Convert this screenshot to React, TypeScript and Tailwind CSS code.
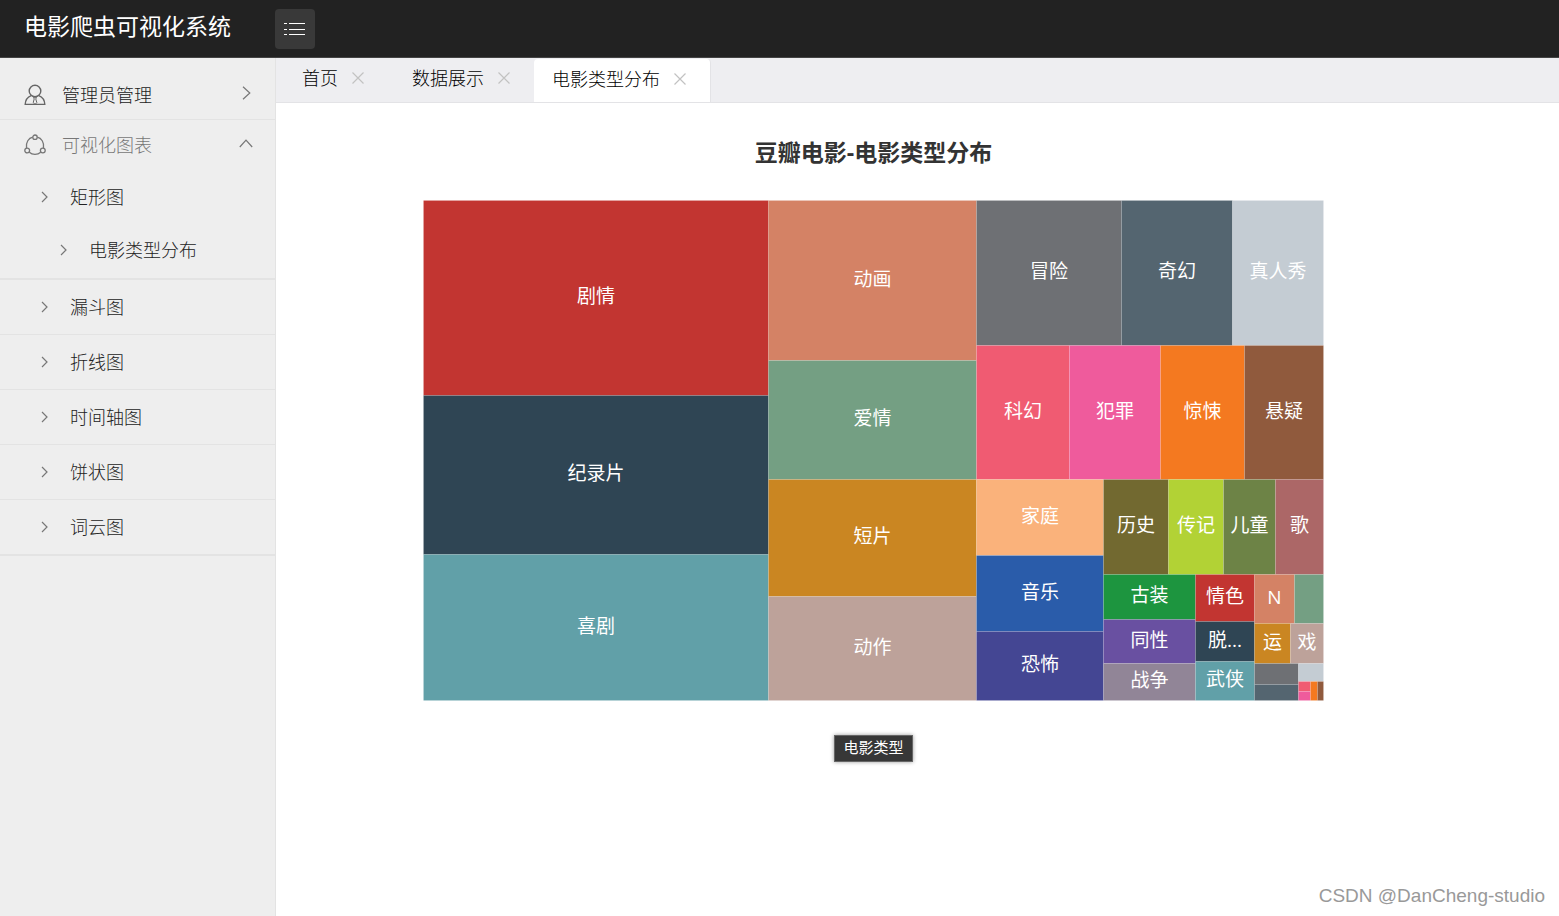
import { useState } from 'react'

interface Tile {
  name: string
  box: [number, number, number, number] // x0, y0, x1, y1
  color: string
}

// 电影类型矩形树图数据
const TILES: Tile[] = [
  { name: '剧情', box: [0, 0, 345, 195], color: '#c23531' },
  { name: '纪录片', box: [0, 195, 345, 354], color: '#2f4554' },
  { name: '喜剧', box: [0, 354, 345, 500], color: '#61a0a8' },
  { name: '动画', box: [345, 0, 553, 160], color: '#d48265' },
  { name: '爱情', box: [345, 160, 553, 279], color: '#749f83' },
  { name: '短片', box: [345, 279, 553, 396], color: '#ca8622' },
  { name: '动作', box: [345, 396, 553, 500], color: '#bda29a' },
  { name: '冒险', box: [553, 0, 698, 145], color: '#6e7074' },
  { name: '奇幻', box: [698, 0, 809, 145], color: '#546570' },
  { name: '真人秀', box: [809, 0, 900, 145], color: '#c4ccd3' },
  { name: '科幻', box: [553, 145, 646, 279], color: '#f05b72' },
  { name: '犯罪', box: [646, 145, 737, 279], color: '#ef5b9c' },
  { name: '惊悚', box: [737, 145, 821, 279], color: '#f47920' },
  { name: '悬疑', box: [821, 145, 900, 279], color: '#905a3d' },
  { name: '家庭', box: [553, 279, 680, 355], color: '#fab27b' },
  { name: '音乐', box: [553, 355, 680, 431], color: '#2a5caa' },
  { name: '恐怖', box: [553, 431, 680, 500], color: '#444693' },
  { name: '历史', box: [680, 279, 745, 374], color: '#726930' },
  { name: '传记', box: [745, 279, 800, 374], color: '#b2d235' },
  { name: '儿童', box: [800, 279, 852, 374], color: '#6d8346' },
  { name: '歌', box: [852, 279, 900, 374], color: '#ac6767' },
  { name: '古装', box: [680, 374, 772, 419], color: '#1d953f' },
  { name: '同性', box: [680, 419, 772, 463], color: '#6950a1' },
  { name: '战争', box: [680, 463, 772, 500], color: '#918597' },
  { name: '情色', box: [772, 374, 831, 421], color: '#c23531' },
  { name: '脱...', box: [772, 421, 831, 461], color: '#2f4554' },
  { name: '武侠', box: [772, 461, 831, 500], color: '#61a0a8' },
  { name: 'N', box: [831, 374, 871, 423], color: '#d48265' },
  { name: '', box: [871, 374, 900, 423], color: '#749f83' },
  { name: '运', box: [831, 423, 867, 463], color: '#ca8622' },
  { name: '戏', box: [867, 423, 900, 463], color: '#bda29a' },
  { name: '', box: [831, 463, 875, 484], color: '#6e7074' },
  { name: '', box: [831, 484, 875, 500], color: '#546570' },
  { name: '', box: [875, 463, 900, 481], color: '#c4ccd3' },
  { name: '', box: [875, 481, 887, 491], color: '#f05b72' },
  { name: '', box: [875, 491, 887, 500], color: '#ef5b9c' },
  { name: '', box: [887, 481, 894, 500], color: '#f47920' },
  { name: '', box: [894, 481, 900, 500], color: '#905a3d' },
]

const CHART_MENU = ['漏斗图', '折线图', '时间轴图', '饼状图', '词云图']
const TABS = ['首页', '数据展示', '电影类型分布']

function UserIcon() {
  return (
    <svg className="h-[22px] w-[22px] shrink-0 text-[#666]" viewBox="0 0 22 22" fill="none" stroke="currentColor" strokeWidth="1.4">
      <circle cx="11" cy="7" r="5.8" />
      <path d="M7.2 11.6C3.6 13 1.4 16 1.2 20.4h19.6c-.2-4.4-2.4-7.4-6-8.8" />
      <path d="M9.6 13.2h2.8l-.6 1.8 1 3.6-1.8 1.8-1.8-1.8 1-3.6z" strokeWidth="1" />
    </svg>
  )
}

function ShareIcon() {
  return (
    <svg className="h-[22px] w-[22px] shrink-0" viewBox="0 0 22 22" fill="none" stroke="currentColor" strokeWidth="1.3">
      <circle cx="11" cy="3.2" r="2.2" />
      <circle cx="3.2" cy="16.5" r="2.4" />
      <circle cx="18.8" cy="16.5" r="2.4" />
      <path d="M8.7 3.1C4.6 4 1.7 8.2 2.500 14M13.3 3.1c4.100.9 7 5.1 6.2 10.900M5.300 18.200c3.200 3 8.200 3 11.400 0" />
    </svg>
  )
}

function Arrow({ className, d = 'M1 1l5 5-5 5', box = '0 0 7 12' }: { className: string; d?: string; box?: string }) {
  return (
    <svg className={`text-[#777] ${className}`} viewBox={box} fill="none" stroke="currentColor" strokeWidth="1.2">
      <path d={d} />
    </svg>
  )
}

function Sidebar() {
  const [open, setOpen] = useState(true)

  return (
    <nav className="w-[276px] shrink-0 border-r border-[#e3e3e3] bg-[#eee] pt-3 text-lg font-light text-[#222]">
      <button className="flex h-[50px] w-full items-center border-b border-[#e3e3e3] pr-6 pl-6">
        <UserIcon />
        <span className="ml-4">管理员管理</span>
        <Arrow className="mb-1 ml-auto h-[14px] w-[9px]" box="0 0 9 14" d="M1 .8L7.8 7 1 13.2" />
      </button>
      <button
        className="flex h-[50px] w-full items-center pr-[22px] pl-6 text-[#777]"
        aria-expanded={open}
        onClick={() => setOpen(!open)}
      >
        <ShareIcon />
        <span className="ml-4">可视化图表</span>
        <Arrow className="mb-1 ml-auto h-[9px] w-[14px]" box="0 0 14 9" d="M.8 8L7 1.2 13.2 8" />
      </button>

      {open && (
        <ul>
          <li className="border-b-2 border-[#e3e3e3] pb-0.5">
            <a href="#treemap" className="flex h-[53px] items-center pl-[41px]">
              <Arrow className="h-3 w-[7px]" />
              <span className="ml-[22px]">矩形图</span>
            </a>
            <a href="#types" className="flex h-[53px] items-center pl-[60px]">
              <Arrow className="h-3 w-[7px]" />
              <span className="ml-[22px]">电影类型分布</span>
            </a>
          </li>
          {CHART_MENU.map((item) => (
            <li key={item} className="border-b border-[#e3e3e3] last:border-b-2">
              <a href="#chart" className="flex h-[54px] items-center pl-[41px]">
                <Arrow className="h-3 w-[7px]" />
                <span className="ml-[22px]">{item}</span>
              </a>
            </li>
          ))}
        </ul>
      )}
    </nav>
  )
}

function TabBar() {
  const [active, setActive] = useState('电影类型分布')

  return (
    <div className="flex h-[45px] border-b border-[#e3e3e6] bg-[#eeeef1] pl-2">
      {TABS.map((tab) => (
        <div
          key={tab}
          className={`flex items-center gap-3.5 pr-6 pb-1 pl-[18px] first:mr-1.5 ${
            tab === active ? 'mt-px rounded-t-sm border-r border-[#e3e3e6] bg-white' : ''
          }`}
        >
          <button className="text-lg font-light whitespace-nowrap text-black" onClick={() => setActive(tab)}>
            {tab}
          </button>
          <button aria-label="关闭" className="text-[#c2c2c2]">
            <svg className="h-3 w-3" viewBox="0 0 12 12" stroke="currentColor" strokeWidth="1.2">
              <path d="M.5.5l11 11M11.5.5l-11 11" />
            </svg>
          </button>
        </div>
      ))}
    </div>
  )
}

function Treemap() {
  return (
    <svg className="h-auto w-full max-w-[901px]" viewBox="-0.5 -0.5 901 501" role="img">
      {TILES.map(({ name, box: [x0, y0, x1, y1], color }) => (
        <g key={`${x0}-${y0}`}>
          <rect x={x0} y={y0} width={x1 - x0} height={y1 - y0} fill={color} stroke="#fff" strokeOpacity="0.1" />
          {name && (
            <text
              x={(x0 + x1) / 2}
              y={(y0 + y1) / 2 + 5}
              textAnchor="middle"
              className="fill-white text-[19px]"
            >
              {name}
            </text>
          )}
        </g>
      ))}
    </svg>
  )
}

export default function App() {
  return (
    <div className="relative flex min-h-screen flex-col bg-white font-['Open_Sans','Noto_Sans_CJK_SC',sans-serif]">
      <header className="flex h-[58px] items-center border-b border-[#444] bg-[#222]">
        <h1 className="w-[275px] pb-1 pl-6 text-[23px] whitespace-nowrap text-white">电影爬虫可视化系统</h1>
        <button aria-label="菜单" className="flex h-10 w-10 items-center justify-center rounded bg-[#393939] text-white">
          <svg className="h-[14px] w-[22px]" viewBox="0 0 22 14" stroke="currentColor" strokeWidth="1.2">
            <path d="M0 1.5h3M5 1.5h16M0 7.5h3M5 7.5h16M0 12.5h3M5 12.5h16" />
          </svg>
        </button>
      </header>

      <div className="flex flex-1">
        <Sidebar />
        <div className="min-w-0 flex-1">
          <TabBar />
          <main className="flex flex-col items-center pt-[31px] pr-[88px]">
            <h2 className="text-[23px] leading-9 font-bold text-[#333]">豆瓣电影-电影类型分布</h2>
            <div className="mt-[30px] flex w-full justify-center">
              <Treemap />
            </div>
            <button className="mt-[34px] h-[27px] border border-[#666] bg-[#373737] px-2 pb-0.5 text-[15px] leading-none text-white shadow-[0_0_4px_#999]">
              电影类型
            </button>
          </main>
        </div>
      </div>

      {/* 水印 */}
      <p className="absolute right-[14px] bottom-1 font-['Liberation_Sans',sans-serif] text-[19px] leading-8 text-[#999]">
        CSDN @DanCheng-studio
      </p>
    </div>
  )
}
